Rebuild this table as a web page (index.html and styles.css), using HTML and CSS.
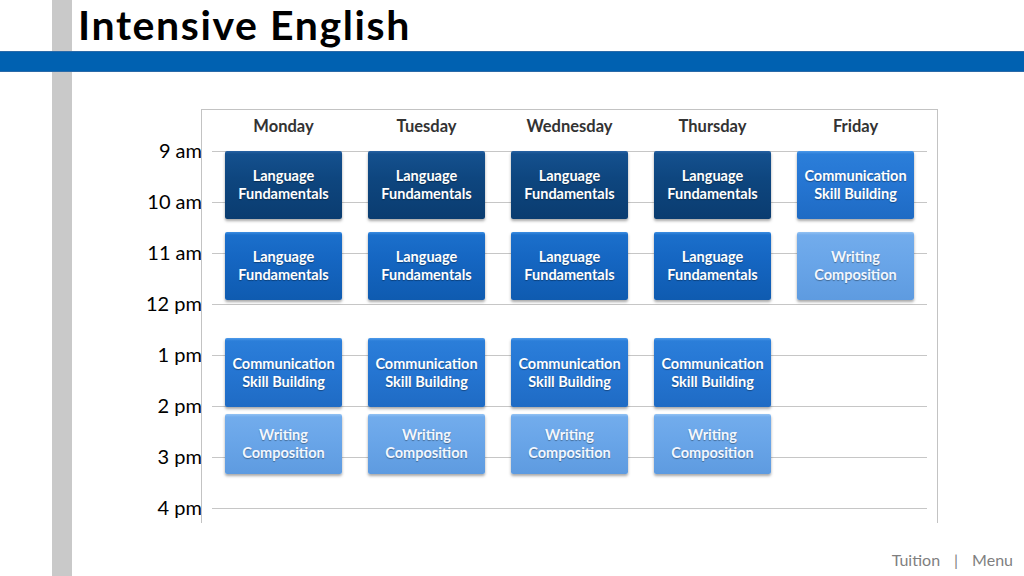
FILE: index.html
```html
<!DOCTYPE html>
<html lang="en">
<head>
<meta charset="utf-8">
<title>Intensive English</title>
<link rel="stylesheet" href="styles.css">
</head>
<body>
<div class="slide">
  <header class="slide-head">
    <h1 class="title">Intensive English</h1>
    <div class="rule"></div>
  </header>

  <main class="chart">
    <div class="times">
      <div class="time">9 am</div>
      <div class="time">10 am</div>
      <div class="time">11 am</div>
      <div class="time">12 pm</div>
      <div class="time">1 pm</div>
      <div class="time">2 pm</div>
      <div class="time">3 pm</div>
      <div class="time">4 pm</div>
    </div>
    <div class="frame">
      <div class="days">
        <div class="day">Monday</div>
        <div class="day">Tuesday</div>
        <div class="day">Wednesday</div>
        <div class="day">Thursday</div>
        <div class="day">Friday</div>
      </div>
      <div class="area">
        <div class="col">
          <div class="block slot-1 navy">Language<br>Fundamentals</div>
          <div class="block slot-2 blue">Language<br>Fundamentals</div>
          <div class="block slot-3 comm">Communication<br>Skill Building</div>
          <div class="block slot-4 writing">Writing<br>Composition</div>
        </div>
        <div class="col">
          <div class="block slot-1 navy">Language<br>Fundamentals</div>
          <div class="block slot-2 blue">Language<br>Fundamentals</div>
          <div class="block slot-3 comm">Communication<br>Skill Building</div>
          <div class="block slot-4 writing">Writing<br>Composition</div>
        </div>
        <div class="col">
          <div class="block slot-1 navy">Language<br>Fundamentals</div>
          <div class="block slot-2 blue">Language<br>Fundamentals</div>
          <div class="block slot-3 comm">Communication<br>Skill Building</div>
          <div class="block slot-4 writing">Writing<br>Composition</div>
        </div>
        <div class="col">
          <div class="block slot-1 navy">Language<br>Fundamentals</div>
          <div class="block slot-2 blue">Language<br>Fundamentals</div>
          <div class="block slot-3 comm">Communication<br>Skill Building</div>
          <div class="block slot-4 writing">Writing<br>Composition</div>
        </div>
        <div class="col">
          <div class="block slot-1 comm">Communication<br>Skill Building</div>
          <div class="block slot-2 writing">Writing<br>Composition</div>
        </div>
      </div>
    </div>
  </main>

  <footer class="foot">Tuition<span class="sep">|</span>Menu</footer>
</div>
</body>
</html>
```

FILE: styles.css
```css
* { box-sizing: border-box; }

html, body {
  margin: 0;
  padding: 0;
  background: #ffffff;
}

.slide {
  width: 1024px;
  height: 576px;
  overflow: hidden;
  display: flex;
  flex-direction: column;
  font-family: Lato, "Open Sans", "Liberation Sans", sans-serif;
  background:
    linear-gradient(to right, transparent 52px, #c9c9c9 52px, #c9c9c9 72px, transparent 72px);
}

.slide-head {
  display: flex;
  flex-direction: column;
}

.title {
  margin: 0;
  height: 51px;
  padding-left: 78px;
  font-size: 41px;
  line-height: 49px;
  font-weight: 700;
  color: #000000;
  letter-spacing: 1.6px;
}

.rule {
  height: 21px;
  background: #0061b1;
  border-top: 1px solid #2a6aa8;
  border-bottom: 1px solid #2a6aa8;
}

.chart {
  display: flex;
  margin-top: 37px;
  margin-left: 130px;
}

.times {
  width: 72px;
  padding-top: 16px;
  text-align: right;
}

.time {
  height: 51px;
  line-height: 51px;
  font-size: 20px;
  color: #000000;
  white-space: nowrap;
}

.frame {
  width: 737px;
  height: 414px;
  border: 1px solid #c3c3c3;
  border-bottom: none;
  margin-left: -1px;
  display: flex;
  flex-direction: column;
}

.days {
  height: 41px;
  margin: 0 10px;
  display: flex;
}

.day {
  width: 143px;
  text-align: center;
  font-size: 16.5px;
  font-weight: 700;
  color: #333333;
  padding-top: 5px;
  line-height: 22px;
}

.area {
  flex: 1;
  margin: 0 10px;
  display: flex;
  background: repeating-linear-gradient(to bottom, #c6c6c6 0, #c6c6c6 1px, transparent 1px, transparent 51px);
}

.col {
  width: 143px;
  display: grid;
  grid-template-rows: 68px 13px 68px 38px 69px 7px 60px;
  align-content: start;
}

.block {
  margin: 0 13px;
  display: flex;
  align-items: center;
  justify-content: center;
  text-align: center;
  font-size: 14.5px;
  font-weight: 700;
  line-height: 18px;
  color: #ffffff;
  border-radius: 2px;
  text-shadow: 0 1px 1px rgba(0, 0, 0, 0.35);
  box-shadow: 0 2px 3px rgba(0, 0, 0, 0.35);
}

.slot-1 { grid-row: 1; }
.slot-2 { grid-row: 3; }
.slot-3 { grid-row: 5; }
.slot-4 { grid-row: 7; }

.navy {
  background: linear-gradient(to bottom, #2862a3 0, #14508e 3px, #0e467f 40%, #0a3c70 100%);
}

.blue {
  background: linear-gradient(to bottom, #3c8ee2 0, #1b6fcb 3px, #1566c2 40%, #0f5bb0 100%);
}

.comm {
  background: linear-gradient(to bottom, #4d9aea 0, #2b7ed9 3px, #2677d4 40%, #1f6bc4 100%);
}

.writing {
  background: linear-gradient(to bottom, #93c2f3 0, #72acec 3px, #6aa6e9 40%, #5e9be0 100%);
  color: #f2f7ff;
}

.foot {
  margin-top: auto;
  height: 26px;
  padding-right: 11px;
  text-align: right;
  font-size: 16px;
  color: #7f7f7f;
  line-height: 20px;
}

.sep {
  margin: 0 14px;
}
```
